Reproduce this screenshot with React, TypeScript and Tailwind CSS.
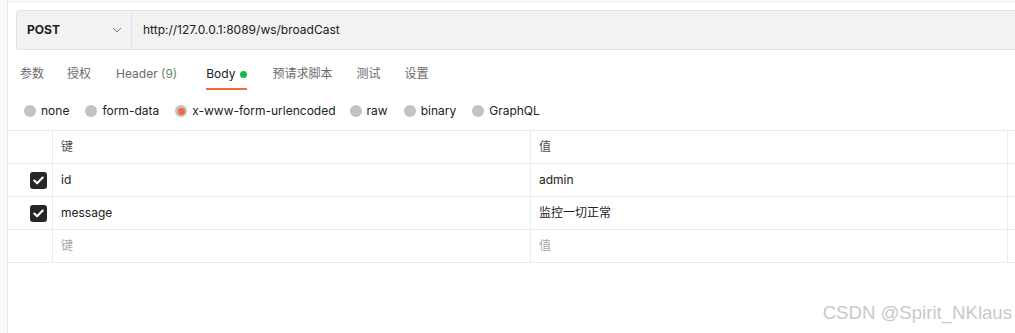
import React from "react";

const font = { fontFamily: 'Inter, "Noto Sans CJK SC", sans-serif' };

function Radio({ label, selected, className }: { label: string; selected?: boolean; className?: string }) {
  return (
    <div className={`flex items-center gap-[5px] ${className ?? ""}`}>
      <span className="w-[12px] h-[12px] rounded-full bg-[#c2c2c2] flex items-center justify-center">
        {selected && <span className="w-[7px] h-[7px] rounded-full bg-[#f26b3a]" />}
      </span>
      <span className="text-[12px] text-[#212121] leading-[20px]">{label}</span>
    </div>
  );
}

function Check() {
  return (
    <span className="w-[17px] h-[17px] rounded-[3px] bg-[#262626] flex items-center justify-center">
      <svg width="11" height="9" viewBox="0 0 11 9" fill="none">
        <path d="M1.3 4.6 L4.1 7.3 L9.7 1.5" stroke="white" strokeWidth="2.1" strokeLinecap="round" strokeLinejoin="round" />
      </svg>
    </span>
  );
}

function Row({ k, v, checked, placeholder, header }: { k: string; v: string; checked?: boolean; placeholder?: boolean; header?: boolean }) {
  const color = placeholder ? "text-[#a6a6a6]" : header ? "text-[#505050]" : "text-[#212121]";
  return (
    <div className="flex h-[33px] border-b border-[#ebebeb]">
      <div className="w-[45px] border-r border-[#ebebeb] flex items-center justify-end pr-[5px]">
        {checked && <Check />}
      </div>
      <div className={`w-[478px] border-r border-[#ebebeb] flex items-center pl-[8px] text-[12px] ${color}`}>{k}</div>
      <div className={`w-[477px] border-r border-[#ebebeb] flex items-center pl-[8px] text-[12px] ${color}`}>{v}</div>
      <div className="flex-1" />
    </div>
  );
}

export default function App() {
  return (
    <div className="w-[1015px] h-[333px] bg-white flex overflow-hidden relative" style={font}>
      <div className="w-[8px] h-full bg-[#f9f9f9] border-r border-[#ececec] shrink-0" />
      <div className="flex-1 flex flex-col mt-[1px] border-t border-[#ececec] min-w-0">
        <div className="pl-[8px] pt-[8px]">
          <div className="w-[1010px] h-[40px] bg-[#f2f2f2] border border-[#e4e4e4] rounded-[3px] flex">
            <div className="w-[115px] border-r border-[#e4e4e4] flex items-center pl-[10px] pr-[9px] justify-between">
              <span className="text-[12px] font-bold text-[#212121]">POST</span>
              <svg width="10" height="6" viewBox="0 0 10 6" fill="none">
                <path d="M1 1 L5 5 L9 1" stroke="#7a7a7a" strokeWidth="1" />
              </svg>
            </div>
            <div className="flex items-center pl-[11px] text-[12px] text-[#212121]">http://127.0.0.1:8089/ws/broadCast</div>
          </div>
        </div>

        <div className="flex pl-[12px] mt-[14px] text-[12px]">
          <div className="flex flex-col mr-[23px]">
            <span className="leading-[20px] text-[#6b6b6b]">参数</span>
          </div>
          <div className="flex flex-col mr-[25px]">
            <span className="leading-[20px] text-[#6b6b6b]">授权</span>
          </div>
          <div className="flex flex-col mr-[29px]">
            <span className="leading-[20px] text-[#6b6b6b]">
              Header <span className="text-[#5f8a6e]">(9)</span>
            </span>
          </div>
          <div className="flex flex-col mr-[25px]">
            <span className="leading-[20px] text-[#212121] flex items-center gap-[5px]">
              Body <span className="w-[7px] h-[7px] rounded-full bg-[#0cbb52]" />
            </span>
            <span className="mt-[4px] h-[2px] bg-[#f26b3a]" />
          </div>
          <div className="flex flex-col mr-[24px]">
            <span className="leading-[20px] text-[#6b6b6b]">预请求脚本</span>
          </div>
          <div className="flex flex-col mr-[24px]">
            <span className="leading-[20px] text-[#6b6b6b]">测试</span>
          </div>
          <div className="flex flex-col">
            <span className="leading-[20px] text-[#6b6b6b]">设置</span>
          </div>
        </div>

        <div className="flex pl-[16px] mt-[11px]">
          <Radio label="none" className="mr-[16px]" />
          <Radio label="form-data" className="mr-[16px]" />
          <Radio label="x-www-form-urlencoded" selected className="mr-[14px]" />
          <Radio label="raw" className="mr-[16px]" />
          <Radio label="binary" className="mr-[16px]" />
          <Radio label="GraphQL" />
        </div>

        <div className="mt-[9px] border-t border-[#ebebeb]">
          <Row k="键" v="值" header />
          <Row k="id" v="admin" checked />
          <Row k="message" v="监控一切正常" checked />
          <Row k="键" v="值" placeholder />
        </div>
      </div>
      <div
        className="absolute right-[3px] bottom-[6px] text-[18.6px] text-[#c9c9c9]"
        style={{ fontFamily: '"Liberation Sans", Arial, sans-serif' }}
      >
        CSDN @Spirit_NKlaus
      </div>
    </div>
  );
}
